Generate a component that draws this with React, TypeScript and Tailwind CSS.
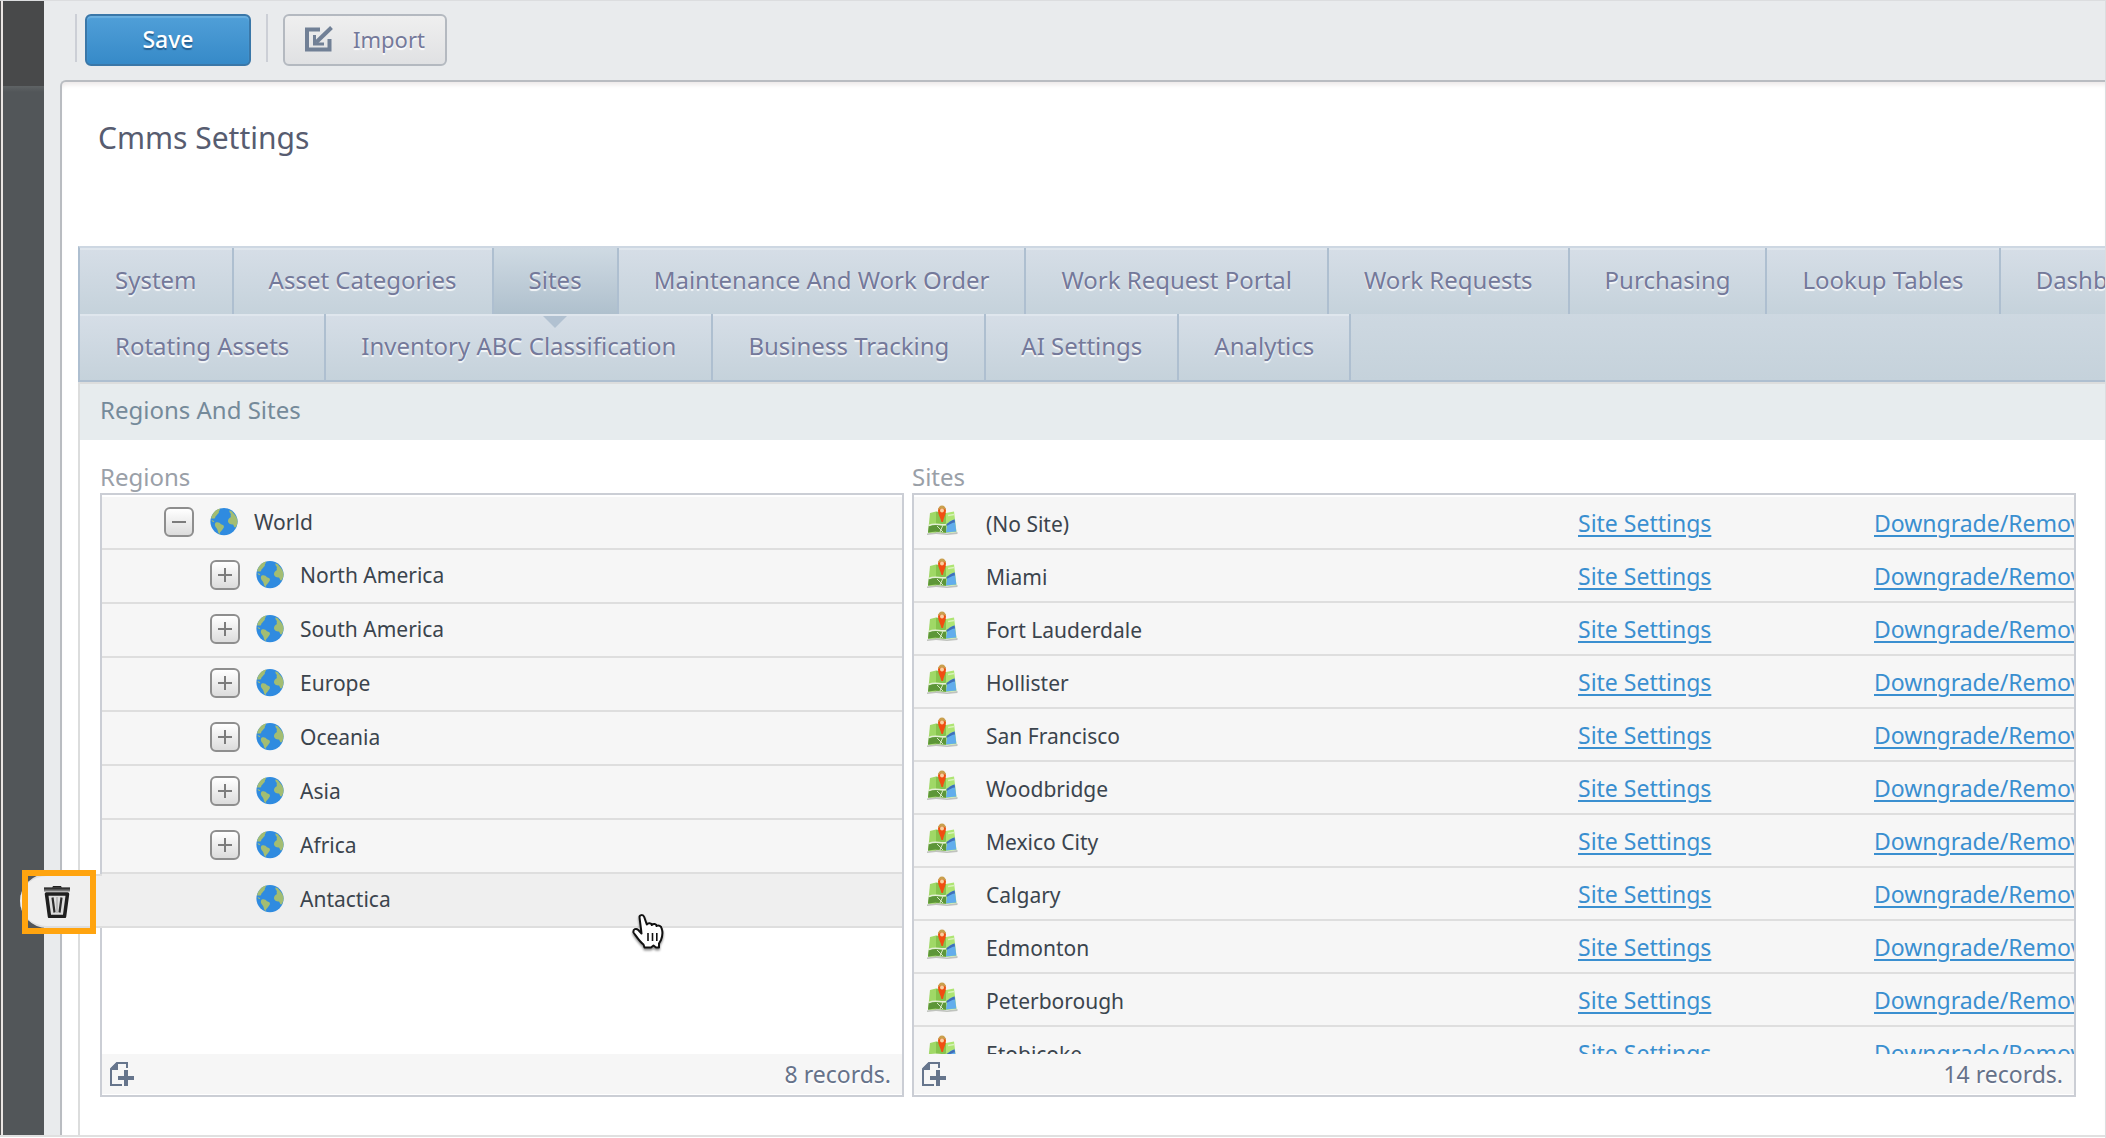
import React from "react";

type Tab = { label: string; active?: boolean };

const tabRows: Tab[][] = [
  [
    { label: "System" },
    { label: "Asset Categories" },
    { label: "Sites", active: true },
    { label: "Maintenance And Work Order" },
    { label: "Work Request Portal" },
    { label: "Work Requests" },
    { label: "Purchasing" },
    { label: "Lookup Tables" },
    { label: "Dashboards" },
  ],
  [
    { label: "Rotating Assets" },
    { label: "Inventory ABC Classification" },
    { label: "Business Tracking" },
    { label: "AI Settings" },
    { label: "Analytics" },
  ],
];

const childRegions = ["North America", "South America", "Europe", "Oceania", "Asia", "Africa"];

const sites = [
  "(No Site)",
  "Miami",
  "Fort Lauderdale",
  "Hollister",
  "San Francisco",
  "Woodbridge",
  "Mexico City",
  "Calgary",
  "Edmonton",
  "Peterborough",
  "Etobicoke",
];

function GlobeIcon() {
  return (
    <svg viewBox="0 0 28 28" className="size-7 shrink-0" aria-hidden="true">
      <circle cx="14" cy="13.6" r="13.6" fill="#2f8be0" />
      <path d="M2.5 6.5C4.500 3 7.500 1 10.500 .6 9.500 1.600 9.800 2.500 8.800 3.600 9.600 5 7.400 6.200 6.300 7.800 5 8.200 5.600 10.200 4.400 10.600 3.400 10 2 11 1 10.400 1.300 9 1.800 7.700 2.500 6.500Z" fill="#a3bd72" />
      <path d="M1.200 11.800C2.500 12.400 3.600 12.600 4.400 13.600L3 14.200Z" fill="#a3bd72" />
      <path d="M5.400 14.800C7.800 13.600 9.800 14.800 11 16.200 12.800 16.500 14.600 17.600 13.800 19.600 12.600 21.200 12 22.800 10.600 23.800 9.600 24.800 9.800 26 9.200 26.200 7.600 24 7.800 21.600 6.400 20 4.800 18.400 4.400 16.400 5.400 14.800Z" fill="#a3bd72" />
      <path d="M19.200 2.600C20.800 2.400 22.400 3.800 23.400 5.200 25.800 7.400 27.400 10 27.600 13.400 27.400 15.800 26.800 17.400 25.400 19.600 23.800 19.800 24.200 17.600 23 16.400 20.800 16.600 18.400 16 18 13.600 17.800 11.400 19.400 9.600 21 9 20 8 21.400 6.800 20.600 5.600 19.600 5 19.600 3.800 19.200 2.600Z" fill="#a3bd72" />
    </svg>
  );
}

function MapIcon() {
  return (
    <svg viewBox="0 0 32 32" className="block size-8" aria-hidden="true">
      <path d="M1 28.500 10 27 21 28.500 31.500 27V29L21 30 10 29 1 30Z" fill="#bfc2bd" />
      <path d="M4 8 10 6.500V27.500L2 28Z" fill="#a0d866" />
      <path d="M10 6.500 20 8V28L10 27Z" fill="#86c44e" />
      <path d="M20 8 28 6.500 30.500 27 20 28Z" fill="#aee573" />
      <path d="M2.800 21C8 18.500 12 20 20 21V27.500L10 26.500 2 27.500Z" fill="#5d9638" />
      <path d="M3 20.500C9 17.500 14 20.500 20 19.500" stroke="#e4efd6" strokeWidth="1.500" fill="none" />
      <path d="M11 21 17 27M17 20 14 27" stroke="#d5e6c4" strokeWidth="1" />
      <path d="M21 20C23 17 25 15 28.800 14.500L30.300 26.500 20 27.500Z" fill="#62adec" />
      <path d="M20.500 19C22.500 18 24 16 28.500 14.500L29 17.500C26 17.500 24 19.500 20.500 21Z" fill="#3f6fb9" />
      <path d="M22 10.500 28 9.500" stroke="#d8f2b8" strokeWidth="1.500" />
      <path d="M15.500 17C14.500 13 12 9.500 12 5.500A4 4.500 0 0 1 20 5.500C20 9.500 17.500 13 17 17Z" fill="#f04e12" />
      <path d="M12 5.500A4 5 0 0 1 20 5.500C19.500 3.500 13 3 12 5.500Z" fill="#c9a04e" />
      <circle cx="16" cy="5.500" r="2" fill="#f7cfa0" />
    </svg>
  );
}

function ImportIcon() {
  return (
    <svg viewBox="0 0 28 26" className="h-[26px] w-7 shrink-0" fill="none" stroke="#718096" aria-hidden="true">
      <path d="M15 3.500H2V23.500H24.500V13" strokeWidth="4" />
      <path d="M26.500 1.500 11 16.500" strokeWidth="4" />
      <path d="M9.500 9V18H19" strokeWidth="3" />
    </svg>
  );
}

function AddPageIcon() {
  return (
    <svg viewBox="0 0 24 24" className="size-6" fill="none" stroke="#66758c" aria-hidden="true">
      <path d="M17 6V1H7.500L1 7.500V23H12" strokeWidth="2" />
      <path d="M0 8V6.500L6.500 0H8V8Z" fill="#66758c" stroke="none" />
      <path d="M16 8V24M8 16H24" strokeWidth="4" />
    </svg>
  );
}

function TrashIcon() {
  return (
    <svg viewBox="0 0 26 32" className="h-8 w-[26px]" fill="none" aria-hidden="true">
      <path d="M9 0H17L18 2H8Z" fill="#222" />
      <path d="M0 1.500H26V5.500H0Z" fill="#777" />
      <path d="M0 2.500H26" stroke="#333" strokeWidth="2" />
      <path d="M2.500 8H23.500L20.500 30.500H5.500Z" fill="#ddd" stroke="#1f1f1f" strokeWidth="3.500" strokeLinejoin="round" />
      <path d="M8.500 11.500 10.500 26.500M17.500 11.500 15.500 26.500" stroke="#2c2c2c" strokeWidth="2.200" />
      <path d="M13 11V27" stroke="#999" strokeWidth="1" />
    </svg>
  );
}

function HandCursor() {
  return (
    <svg viewBox="0 0 32 36" className="h-9 w-8 drop-shadow-[0_2px_1px_rgba(0,0,0,0.45)]" aria-hidden="true">
      <path
        d="M7.500 3C7.300 .8 11.200 .2 12.200 3L14.800 10.500C15.800 8.500 19.500 8.800 19.800 11 21.500 9.300 24.300 9.800 24.600 12 26.500 10.800 29.300 12 29.600 14.500 31 18 30.500 22 29 26L27 29.500V33.500H24L21.500 31.500 19 33.500H12.500L11.500 30.500C7.500 27.500 4.500 22.500 1.500 18.500 .8 15 4.200 14 6.300 16L9.500 19.500C9 14 8 8 7.500 3Z"
        fill="#fff"
        stroke="#111"
        strokeWidth="2"
        strokeLinejoin="round"
      />
      <path d="M16 19V27M20.500 19V27M24.800 19V27" stroke="#111" strokeWidth="1.600" />
    </svg>
  );
}

function Expander({ open, name }: { open?: boolean; name: string }) {
  return (
    <button
      type="button"
      aria-label={(open ? "Collapse " : "Expand ") + name}
      aria-expanded={!!open}
      className="grid size-[30px] shrink-0 place-items-center rounded-md border-2 border-[#8e8e8e] bg-linear-to-b from-white to-[#dcdcdc]"
    >
      <svg viewBox="0 0 14 14" className="size-[14px]" stroke="#7c7c7c" strokeWidth="2" aria-hidden="true">
        <path d={open ? "M0 7H14" : "M0 7H14M7 0V14"} />
      </svg>
    </button>
  );
}

function TabButton({ label, active }: Tab) {
  return (
    <button
      type="button"
      role="tab"
      aria-selected={!!active}
      className={
        "relative h-[66px] shrink-0 border-r-2 border-r-[#aebfd0] px-[35px] pb-0.5 text-2xl whitespace-nowrap text-[#74799a] [text-shadow:0_2px_1px_rgba(255,255,255,0.85)] " +
        (active
          ? "bg-linear-to-b from-[#cfdae3] to-[#afc0cd]"
          : "bg-linear-to-b from-[#d6dee7] to-[#c5d2db] shadow-[inset_0_2px_0_#dfe6ed]")
      }
    >
      {label}
      {active && (
        <svg viewBox="0 0 24 12" className="absolute top-full left-1/2 z-10 mt-0.5 h-3 w-6 -translate-x-1/2" aria-hidden="true">
          <path d="M0 0H24L12 12Z" fill="#b1c1d1" />
        </svg>
      )}
    </button>
  );
}

function GridPanel({ title, count, children }: { title: string; count: string; children: React.ReactNode }) {
  return (
    <section aria-label={title} className="min-w-0">
      <h3 className="text-2xl leading-8 text-[#9aa0a8]">{title}</h3>
      <div className="border-2 border-[#cbced5]">
        <div className="h-[559px] pt-0.5">{children}</div>
        <footer className="relative flex h-[41px] items-center justify-between border-b border-white bg-[#f6f6f6] pr-[11px] pl-2">
          <button type="button" aria-label={"Add to " + title}>
            <AddPageIcon />
          </button>
          <span className="text-[23px] leading-8 text-[#66728a] [text-shadow:0_2px_1px_#fff]">{count}</span>
        </footer>
      </div>
    </section>
  );
}

const link = "text-[23px] text-[#3a8fd0] underline decoration-2 underline-offset-[3px]";

export default function App() {
  return (
    <div className="flex min-h-screen flex-col overflow-hidden border-t border-r border-[#dcdddf] bg-white pb-px font-['Noto_Sans',sans-serif]">
      <div className="flex flex-1 border-b-2 border-[#e0e0e0]">
        <aside className="flex w-11 shrink-0 bg-[#525659]">
          <div className="w-px bg-[#555]" />
          <div className="w-0.5 bg-[#ebe6e4]" />
          <div className="flex-1">
            <div className="h-[85px] bg-[#48494a]" />
            <div className="h-1.5 bg-linear-to-b from-[#5f6365] to-[#525659]" />
          </div>
        </aside>

        <div className="flex min-w-0 flex-1 flex-col bg-[#e9ebed]">
          <header className="flex h-[79px] items-start pt-[13px] pl-[31px]">
            <div className="mr-2 h-12 w-0.5 bg-[#cccfd6]" />
            <button
              type="button"
              className="h-[52px] w-[166px] rounded-md border-2 border-[#3a77a8] bg-linear-to-b from-[#509fd8] to-[#368ac8] pb-0.5 text-[23px] leading-8 font-medium text-white shadow-[inset_0_2px_1px_#6bb0e0] [text-shadow:0_2px_1px_rgba(20,60,100,0.6)]"
            >
              Save
            </button>
            <div className="mx-[15px] h-12 w-0.5 bg-[#cccfd6]" />
            <button
              type="button"
              className="flex h-[52px] w-[164px] items-center justify-center gap-5 rounded-md border-2 border-[#b4b9c0] bg-linear-to-b from-[#efefef] to-[#e0e1e3] pb-0.5 text-[22px] leading-8 text-[#74799a] [text-shadow:0_2px_1px_#fff]"
            >
              <ImportIcon />
              Import
            </button>
          </header>

          <main className="ml-4 flex flex-1 flex-col rounded-tl-md border-t-2 border-l-2 border-[#b9bcc1] bg-white pl-4 shadow-[inset_0_5px_4px_-2px_#eeeaea]">
            <h1 className="mt-9 mb-[88px] pl-5 text-3xl leading-10 text-[#575c70]">Cmms Settings</h1>

            <div
              role="tablist"
              className="overflow-hidden border-t-2 border-b-2 border-l-2 border-t-[#cdd7e2] border-b-[#aebfd0] border-l-[#aebfd0] bg-linear-to-b from-[#d6dee7] to-[#c5d2db]"
            >
              {tabRows.map((row, i) => (
                <div key={i} className="flex">
                  {row.map((t) => (
                    <TabButton key={t.label} {...t} />
                  ))}
                </div>
              ))}
            </div>

            <div className="flex-1 border-t-2 border-l-2 border-[#dcdddd]">
              <h2 className="bg-[#e7ecee] pb-1 pl-5 text-2xl leading-13 text-[#758a9a]">Regions And Sites</h2>

              <div className="grid grid-cols-[804fr_1164fr] gap-2 pt-[21px] pr-[29px] pb-[38px] pl-5">
                <GridPanel title="Regions" count="8 records.">
                  <ul role="tree" className="text-[21px] leading-8 text-[#3b444d]">
                    <li role="treeitem" className="flex h-[53px] items-center gap-4 border-b-2 border-[#dedede] bg-[#f6f6f6] pb-0.5 pl-[62px]">
                      <Expander open name="World" />
                      <GlobeIcon />
                      World
                    </li>
                    {childRegions.map((name) => (
                      <li key={name} role="treeitem" className="flex h-[54px] items-center gap-4 border-b-2 border-[#dedede] bg-[#f6f6f6] pb-0.5 pl-[108px]">
                        <Expander name={name} />
                        <GlobeIcon />
                        {name}
                      </li>
                    ))}
                    <li role="treeitem" className="relative flex h-[54px] items-center gap-4 border-b-2 border-[#dedede] bg-[#efefef] pb-0.5 pl-[154px]">
                      <GlobeIcon />
                      Antactica
                      <div className="absolute top-0 -left-[82px] h-[54px] w-[82px] rounded-l-full border-y-2 border-[#dedede] bg-[#efefef]" />
                      <button
                        type="button"
                        aria-label="Delete Antactica"
                        className="absolute -top-1 -left-20 grid h-16 w-[74px] place-items-center border-6 border-[#ffa40f] pr-1"
                      >
                        <TrashIcon />
                      </button>
                      <div className="absolute top-10 left-[530px]">
                        <HandCursor />
                      </div>
                    </li>
                  </ul>
                </GridPanel>

                <GridPanel title="Sites" count="14 records.">
                  <div className="h-full overflow-hidden">
                    <table className="w-full table-fixed border-separate border-spacing-0 text-left whitespace-nowrap">
                      <colgroup>
                        <col className="w-[72px]" />
                        <col />
                        <col className="w-[296px]" />
                        <col className="w-[200px]" />
                      </colgroup>
                      <tbody>
                        {sites.map((name) => (
                          <tr key={name} className="bg-[#f6f6f6] *:h-[53px] *:border-b-2 *:border-[#dedede] *:p-0 *:pt-0.5">
                            <td>
                              <div className="pb-1.5 pl-3">
                                <MapIcon />
                              </div>
                            </td>
                            <td className="text-[21px] leading-8 text-[#3b444d]">{name}</td>
                            <td>
                              <a href="#settings" className={link}>
                                Site Settings
                              </a>
                            </td>
                            <td className="overflow-hidden">
                              <a href="#remove" className={link}>
                                Downgrade/Remove
                              </a>
                            </td>
                          </tr>
                        ))}
                      </tbody>
                    </table>
                  </div>
                </GridPanel>
              </div>
            </div>
          </main>
        </div>
      </div>
    </div>
  );
}
